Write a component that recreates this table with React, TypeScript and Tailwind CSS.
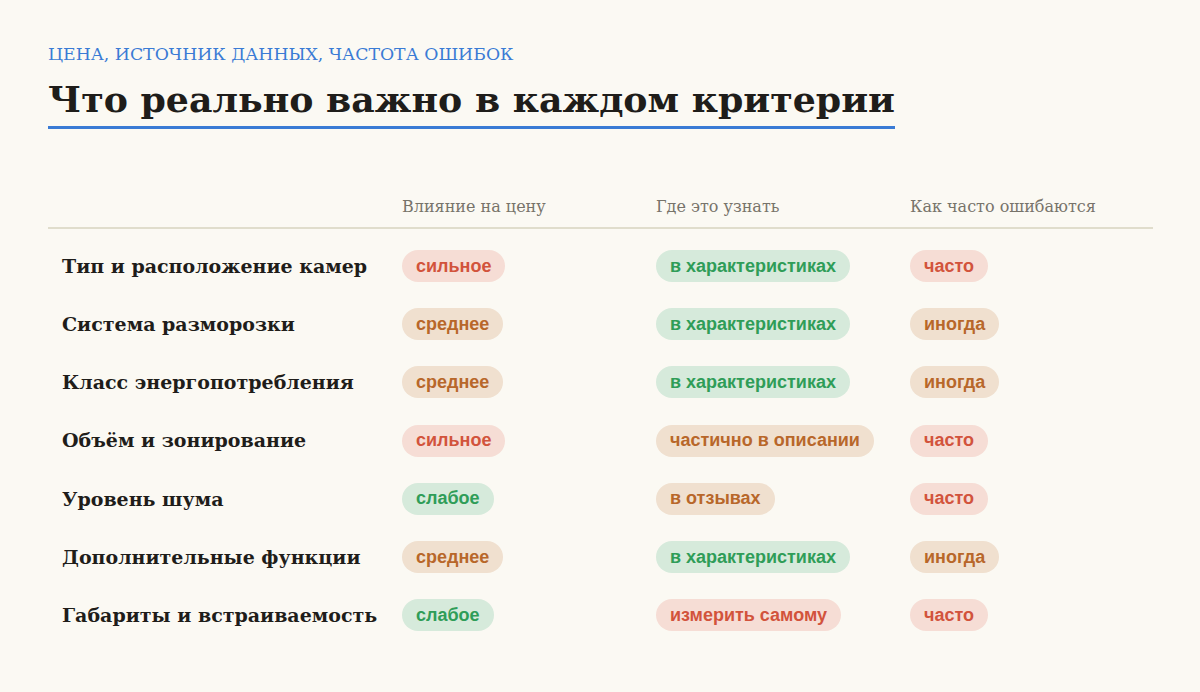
const serif = { fontFamily: '"DejaVu Serif", "Liberation Serif", serif' };
const sans = { fontFamily: '"Liberation Sans", Arial, sans-serif' };

type Tone = "red" | "orange" | "green";

const TONES: Record<Tone, string> = {
  red: "bg-[#f6ddd5] text-[#d2533c]",
  orange: "bg-[#f0e0cf] text-[#b8672a]",
  green: "bg-[#d6eadb] text-[#2f9d58]",
};

const ROWS: { name: string; cells: [string, Tone][] }[] = [
  { name: "Тип и расположение камер", cells: [["сильное", "red"], ["в характеристиках", "green"], ["часто", "red"]] },
  { name: "Система разморозки", cells: [["среднее", "orange"], ["в характеристиках", "green"], ["иногда", "orange"]] },
  { name: "Класс энергопотребления", cells: [["среднее", "orange"], ["в характеристиках", "green"], ["иногда", "orange"]] },
  { name: "Объём и зонирование", cells: [["сильное", "red"], ["частично в описании", "orange"], ["часто", "red"]] },
  { name: "Уровень шума", cells: [["слабое", "green"], ["в отзывах", "orange"], ["часто", "red"]] },
  { name: "Дополнительные функции", cells: [["среднее", "orange"], ["в характеристиках", "green"], ["иногда", "orange"]] },
  { name: "Габариты и встраиваемость", cells: [["слабое", "green"], ["измерить самому", "red"], ["часто", "red"]] },
];

const Pill = ({ label, tone }: { label: string; tone: Tone }) => (
  <span
    className={`inline-flex items-center h-8 px-[14px] rounded-full text-[18px] font-bold ${TONES[tone]}`}
    style={sans}
  >
    {label}
  </span>
);

export default function App() {
  return (
    <div className="min-h-[692px] w-full bg-[#fbf9f3] px-12 pt-[42px]" style={serif}>
      <p className="text-[17.3px] uppercase text-[#3a7bd5] leading-6">ЦЕНА, ИСТОЧНИК ДАННЫХ, ЧАСТОТА ОШИБОК</p>
      <h1 className="mt-[10px] inline-block border-b-[3px] border-[#3a7bd5] pb-[2px] text-[36.3px] font-bold leading-[48px] text-[#1f1d1a]">
        Что реально важно в каждом критерии
      </h1>

      <div className="mt-[66px] w-[1105px]">
        <div className="grid grid-cols-[340px_254px_254px_1fr] border-b-2 border-[#e0ddcc] pb-[8px] text-[16px] text-[#77736a]">
          <div />
          <div className="pl-[14px]">Влияние на цену</div>
          <div className="pl-[14px]">Где это узнать</div>
          <div className="pl-[14px]">Как часто ошибаются</div>
        </div>
        <div className="pt-2">
          {ROWS.map((row) => (
            <div key={row.name} className="grid grid-cols-[340px_254px_254px_1fr] items-center h-[58.2px]">
              <div className="pl-[14px] text-[19px] font-bold text-[#1f1d1a]">{row.name}</div>
              {row.cells.map(([label, tone], i) => (
                <div key={i} className="pl-[14px]">
                  <Pill label={label} tone={tone} />
                </div>
              ))}
            </div>
          ))}
        </div>
      </div>
    </div>
  );
}
